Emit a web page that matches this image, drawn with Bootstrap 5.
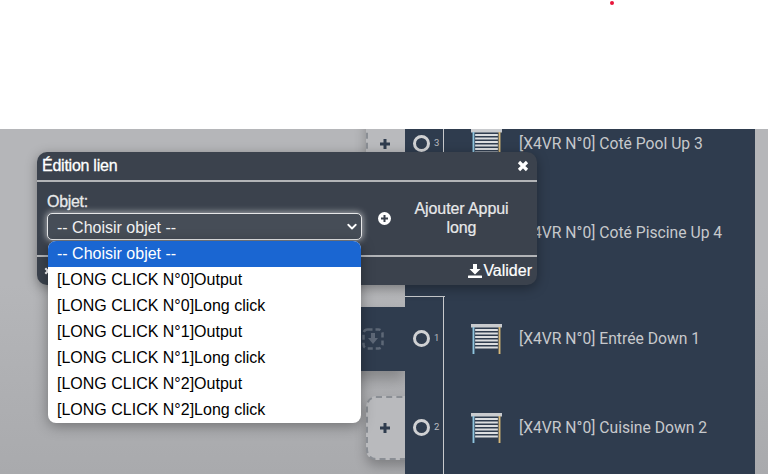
<!DOCTYPE html>
<html lang="fr">
<head>
<meta charset="UTF-8">
<meta name="viewport" content="width=device-width, initial-scale=1.0">
<link rel="stylesheet" href="https://cdn.jsdelivr.net/npm/bootstrap@5.3.0/dist/css/bootstrap.min.css">
<title>Édition lien</title>
<style>
html, body { height: 474px; overflow: hidden; background: #fff; }
body { font-family: "Liberation Sans", Arial, sans-serif; }
.top-band { height: 129px; position: relative; }
.red-dot { position: absolute; left: 610px; top: 1px; width: 4px; height: 4px; border-radius: 50%; background: #e8153a; }
.work-area { height: 345px; position: relative; overflow: hidden; background: #b5b6b9; }
.shade { position: absolute; left: 0; right: 0; bottom: 0; height: 190px; background: linear-gradient(#b5b6b9, #a9aaad); }
.canvas-col { width: 405px; flex: none; position: relative; }
.right-col { width: 350px; flex: none; background: #2f3c4e; color: #c7c9cc; font-family: Roboto, sans-serif; font-size: 15.7px; position: relative; z-index: 1; }
.rows-wrap { margin-top: -30px; }
.output-row { height: 89px; padding-left: 8px; }
.output-row.first-of-group { margin-top: 19px; height: 87px; padding-bottom: 2px; }
.output-row.last-of-group { height: 100px; padding-bottom: 11px; }
.io-side { width: 39px; margin-left: -8px; padding-left: 8px; border-right: 1px solid #c7c9cc; align-self: stretch; }
.first-of-group .io-side { margin-bottom: -2px; padding-bottom: 2px; }
.last-of-group .io-side { margin-bottom: -11px; padding-bottom: 11px; }
.group-top { border-top: 1px solid #c7c9cc; width: 40px; position: absolute; left: 0; top: 167px; height: 0; }
.io-ring { width: 17px; height: 17px; border: 3px solid #d0d1d3; border-radius: 50%; flex: none; }
.io-num { font-size: 9.5px; margin-left: 4px; color: #b9bcc1; }
.shutter { margin-left: 27px; margin-right: 17px; flex: none; }
.dashed-card { position: absolute; left: 366px; width: 60px; height: 64px; border: 2px dashed #8a8e94; border-radius: 10px; background: #b9babd; box-shadow: 0 6px 12px rgba(0,0,0,.25); color: #2f3c4e; }
.plus-icon { position: absolute; left: 11px; top: 24px; }
.node-bar { position: absolute; left: 300px; top: 178px; width: 105px; height: 64px; background: #2f3c4e; box-shadow: 0 8px 14px rgba(0,0,0,.25); }
.node-bar svg { position: absolute; left: 62px; top: 21px; }
.edit-box { position: absolute; left: 37px; top: 23px; width: 500px; height: 133px; background: #3b424d; color: #e8e9ea; border-radius: 10px; box-shadow: 0 3px 12px rgba(0,0,0,.35); font-size: 16px; z-index: 2; }
.edit-head { height: 30px; padding: 0 8px 0 5px; border-bottom: 2px solid #b2b4b7; color: #fff; letter-spacing: -.25px; -webkit-text-stroke: .3px #fff; }
.edit-body { height: 75px; padding: 11px 9px 0 10px; border-bottom: 2px solid #b2b4b7; }
.edit-foot { height: 28px; padding: 0 5px 0 7px; }
.field-col { width: 315px; flex: none; }
.field-label { line-height: 18px; margin-bottom: 2px; letter-spacing: -.3px; -webkit-text-stroke: .3px #e8e9ea; }
.form-select.obj-select { height: 27px; padding: 1px 0 0 9px; font-size: 16px; line-height: 25px; color: #f1f1f2; background-color: #464d57; border: 1px solid #e6e7e8; border-radius: 5px; box-shadow: 0 0 6px 1px rgba(255,255,255,.55); background-image: url("data:image/svg+xml,%3csvg xmlns='http://www.w3.org/2000/svg' viewBox='0 0 16 16'%3e%3cpath fill='none' stroke='%23fff' stroke-linecap='round' stroke-linejoin='round' stroke-width='2.4' d='m3 5 5 5 5-5'/%3e%3c/svg%3e"); background-position: right 3px center; background-size: 12px; }
.add-btn { padding: 0; margin: 6px 0 0 16px; border: 0; background: none; color: #e8e9ea; font-size: 16px; line-height: 19px; letter-spacing: -.1px; -webkit-text-stroke: .2px #e8e9ea; align-self: flex-start; }
.add-label { width: 128px; text-align: center; margin-left: 6.5px; }
.save-btn { color: #fff; font-size: 16px; gap: 1px; -webkit-text-stroke: .2px #fff; }
.obj-menu { position: absolute; left: 48px; top: 112px; width: 313px; height: 182px; background: #fff; border-radius: 8px; overflow: hidden; box-shadow: 0 3px 14px rgba(0,0,0,.35); z-index: 3; }
.obj-option { height: 26px; line-height: 26px; padding-left: 9px; font-size: 16px; color: #000; }
.obj-option.active-opt { background: #1a66d2; color: #fff; }
</style>
</head>
<body>
<div class="top-band"><span class="red-dot"></span></div>
<div class="work-area d-flex">
    <div class="shade"></div>
    <div class="canvas-col"></div>
    <div class="right-col">
        <div class="rows-wrap">
            <div class="output-row d-flex align-items-center">
                <div class="io-side d-flex align-items-center"><span class="io-ring"></span><span class="io-num">3</span></div>
                <svg class="shutter" width="31" height="30" viewBox="0 0 30 30" preserveAspectRatio="none"><use href="#shutter-icon"/></svg>
                <span>[X4VR N°0] Coté Pool Up 3</span>
            </div>
            <div class="output-row d-flex align-items-center">
                <div class="io-side d-flex align-items-center"><span class="io-ring"></span><span class="io-num">4</span></div>
                <svg class="shutter" width="31" height="30" viewBox="0 0 30 30" preserveAspectRatio="none"><use href="#shutter-icon"/></svg>
                <span>[X4VR N°0] Coté Piscine Up 4</span>
            </div>
            <div class="output-row first-of-group d-flex align-items-center">
                <div class="io-side d-flex align-items-center"><span class="io-ring"></span><span class="io-num">1</span></div>
                <svg class="shutter" width="31" height="30" viewBox="0 0 30 30" preserveAspectRatio="none"><use href="#shutter-icon"/></svg>
                <span>[X4VR N°0] Entrée Down 1</span>
            </div>
            <div class="output-row last-of-group d-flex align-items-center">
                <div class="io-side d-flex align-items-center"><span class="io-ring"></span><span class="io-num">2</span></div>
                <svg class="shutter" width="31" height="30" viewBox="0 0 30 30" preserveAspectRatio="none"><use href="#shutter-icon"/></svg>
                <span>[X4VR N°0] Cuisine Down 2</span>
            </div>
        </div>
        <div class="group-top"></div>
    </div>

    <div class="dashed-card" style="top:-17px"><svg class="plus-icon" width="12" height="12" viewBox="0 0 12 12"><path d="M6 1v10M1 6h10" stroke="#2f3c4e" stroke-width="3"/></svg></div>
    <div class="node-bar"><svg width="22" height="22" viewBox="0 0 22 22" fill="none"><rect x="1.500" y="1.500" width="19" height="19" rx="4" stroke="#5e6877" stroke-width="2.500" stroke-dasharray="5 3"/><path d="M9 5h4v5h3l-5 6-5-6h3z" fill="#5e6877"/></svg></div>
    <div class="dashed-card" style="top:267px"><svg class="plus-icon" width="12" height="12" viewBox="0 0 12 12"><path d="M6 1v10M1 6h10" stroke="#2f3c4e" stroke-width="3"/></svg></div>

    <div class="edit-box">
        <div class="edit-head d-flex align-items-center justify-content-between">
            <span>Édition lien</span>
            <svg width="12" height="12" viewBox="0 0 12 12"><path d="M2 2l8 8M10 2l-8 8" stroke="#fff" stroke-width="3.200"/></svg>
        </div>
        <div class="edit-body d-flex">
            <div class="field-col">
                <div class="field-label">Objet:</div>
                <select class="form-select obj-select"><option>-- Choisir objet --</option></select>
            </div>
            <button type="button" class="btn add-btn d-flex align-items-center">
                <svg width="13" height="13" viewBox="0 0 13 13"><circle cx="6.500" cy="6.500" r="6.500" fill="#fff"/><path d="M6.500 3v7M3 6.500h7" stroke="#3b424d" stroke-width="2"/></svg>
                <span class="add-label">Ajouter Appui long</span>
            </button>
        </div>
        <div class="edit-foot d-flex align-items-center justify-content-between">
            <svg width="8" height="8" viewBox="0 0 12 12"><path d="M2 2l8 8M10 2l-8 8" stroke="#fff" stroke-width="3.200"/></svg>
            <span class="save-btn d-flex align-items-center">
                <svg width="14" height="14" viewBox="0 0 14 14" fill="#fff"><path d="M5 0h4v5h3.500L7 10.500 1.500 5H5z"/><rect y="11.500" width="14" height="2.500" rx=".5"/></svg>
                Valider
            </span>
        </div>
    </div>

    <div class="obj-menu">
        <div class="obj-option active-opt">-- Choisir objet --</div>
        <div class="obj-option">[LONG CLICK N°0]Output</div>
        <div class="obj-option">[LONG CLICK N°0]Long click</div>
        <div class="obj-option">[LONG CLICK N°1]Output</div>
        <div class="obj-option">[LONG CLICK N°1]Long click</div>
        <div class="obj-option">[LONG CLICK N°2]Output</div>
        <div class="obj-option">[LONG CLICK N°2]Long click</div>
    </div>
</div>

<svg width="0" height="0" class="position-absolute">
    <symbol id="shutter-icon" viewBox="0 0 30 30">
        <rect x="0" y="0" width="30" height="3.500" fill="#c9cbce"/>
        <rect x="1.500" y="3" width="1.800" height="27" fill="#8fc4de"/>
        <rect x="26.700" y="3" width="1.800" height="27" fill="#d8b878"/>
        <path d="M4 6h22M4 9.500h22M4 13h22M4 16.500h22M4 20h22M4 23.500h22" stroke="#dcdee0" stroke-width="1.800"/>
    </symbol>
</svg>

<script src="https://cdn.jsdelivr.net/npm/bootstrap@5.3.0/dist/js/bootstrap.bundle.min.js"></script>
</body>
</html>
